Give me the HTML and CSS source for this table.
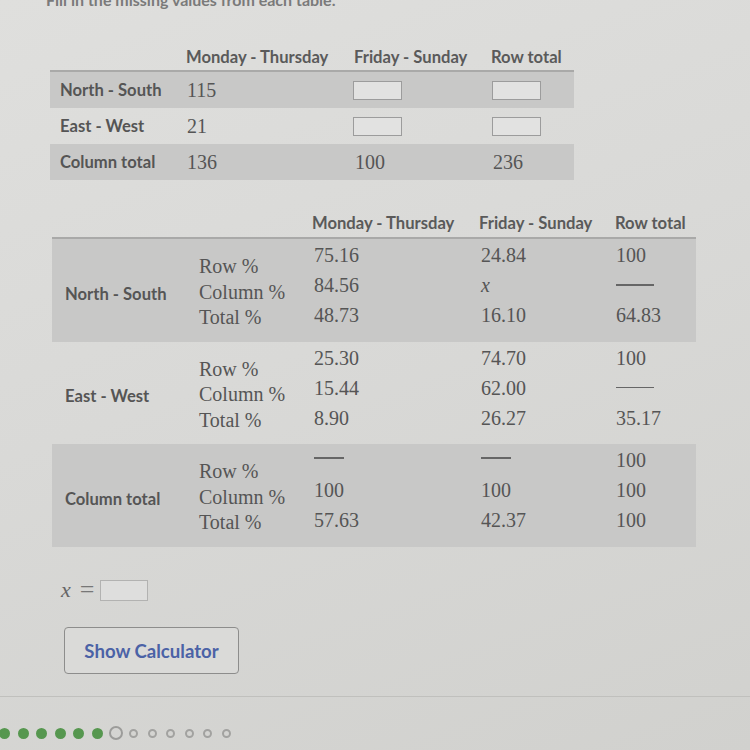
FILE: index.html
```html
<!DOCTYPE html>
<html>
<head>
<meta charset="utf-8">
<link rel="stylesheet" href="styles.css">
</head>
<body>
<div class="page">
  <p class="title">Fill in the missing values from each table.</p>

  <div class="t1">
    <div class="h"></div>
    <div class="h c1">Monday - Thursday</div>
    <div class="h c2">Friday - Sunday</div>
    <div class="h c3">Row total</div>

    <div class="r shade lab">North - South</div>
    <div class="r shade num c1">115</div>
    <div class="r shade c2"><span class="box"></span></div>
    <div class="r shade c3"><span class="box"></span></div>

    <div class="r lab">East - West</div>
    <div class="r num c1">21</div>
    <div class="r c2"><span class="box"></span></div>
    <div class="r c3"><span class="box"></span></div>

    <div class="r shade lab">Column total</div>
    <div class="r shade num c1">136</div>
    <div class="r shade num c2v">100</div>
    <div class="r shade num c3v">236</div>
  </div>

  <div class="t2">
    <div class="h"></div>
    <div class="h"></div>
    <div class="h k1">Monday - Thursday</div>
    <div class="h k2">Friday - Sunday</div>
    <div class="h k3">Row total</div>

    <div class="b shade lab">North - South</div>
    <div class="b shade sub"><span>Row %</span><span>Column %</span><span>Total %</span></div>
    <div class="b shade vals k1"><span>75.16</span><span>84.56</span><span>48.73</span></div>
    <div class="b shade vals k2"><span>24.84</span><span><i>x</i></span><span>16.10</span></div>
    <div class="b shade vals k3"><span>100</span><span><b class="dash long"></b></span><span>64.83</span></div>

    <div class="b lab">East - West</div>
    <div class="b sub"><span>Row %</span><span>Column %</span><span>Total %</span></div>
    <div class="b vals k1"><span>25.30</span><span>15.44</span><span>8.90</span></div>
    <div class="b vals k2"><span>74.70</span><span>62.00</span><span>26.27</span></div>
    <div class="b vals k3"><span>100</span><span><b class="dash"></b></span><span>35.17</span></div>

    <div class="b shade lab">Column total</div>
    <div class="b shade sub"><span>Row %</span><span>Column %</span><span>Total %</span></div>
    <div class="b shade vals k1"><span><b class="dash"></b></span><span>100</span><span>57.63</span></div>
    <div class="b shade vals k2"><span><b class="dash"></b></span><span>100</span><span>42.37</span></div>
    <div class="b shade vals k3"><span>100</span><span>100</span><span>100</span></div>
  </div>

  <div class="xrow"><i>x</i><span class="eq">=</span><span class="xbox"></span></div>

  <button class="calc">Show Calculator</button>
</div>
<div class="rule"></div>
<div class="dots">
  <span class="d on"></span><span class="d on"></span><span class="d on"></span><span class="d on"></span><span class="d on"></span><span class="d on"></span>
  <span class="d cur"></span>
  <span class="d"></span><span class="d"></span><span class="d"></span><span class="d"></span><span class="d"></span><span class="d"></span>
</div>
</body>
</html>
```

FILE: styles.css
```css
html, body {
  margin: 0;
  padding: 0;
}
body {
  width: 750px;
  height: 750px;
  overflow: hidden;
  background: linear-gradient(160deg, #dfdfdd 0%, #d9d9d7 45%, #d1d1ce 100%);
  font-family: Lato, "Liberation Sans", sans-serif;
  color: #555;
}
.title {
  margin: -8px 0 0 46px;
  height: 16px;
  line-height: 16px;
  font-size: 16px;
  font-weight: 700;
  color: #7a7a7a;
  white-space: nowrap;
}

/* table 1 */
.t1 {
  margin: 36px 0 0 50px;
  width: 524px;
  display: grid;
  grid-template-columns: 130px 165px 140px 89px;
  grid-template-rows: 28px 36px 36px 36px;
}
.h {
  display: flex;
  align-items: center;
  border-bottom: 2px solid #a9a9a8;
  font-size: 16.6px;
  font-weight: 700;
  color: #5a5a5a;
  white-space: nowrap;
}
.t1 .h { height: 28px; box-sizing: border-box; }
.t1 .c1 { padding-left: 6px; }
.t1 .c2 { padding-left: 9px; }
.t1 .c3 { padding-left: 6px; }
.t1 .c2v { padding-left: 10px; }
.t1 .c3v { padding-left: 8px; }
.shade { background: #c8c8c7; }
.r {
  display: flex;
  align-items: center;
}
.lab {
  font-size: 16.6px;
  font-weight: 700;
  color: #555;
  white-space: nowrap;
}
.t1 .lab { padding-left: 10px; }
.num {
  font-family: "Liberation Serif", serif;
  font-size: 20px;
  color: #555;
}
.t1 .num.c1 { padding-left: 7px; }
.t1 .r.c2 { padding-left: 8px; }
.t1 .r.c3 { padding-left: 7px; }
.box {
  display: block;
  width: 47px;
  height: 17px;
  border: 1px solid #9c9c9c;
  background: #e2e2e1;
}

/* table 2 */
.t2 {
  margin: 29px 0 0 52px;
  width: 644px;
  display: grid;
  grid-template-columns: 138px 115px 165px 137px 89px;
  grid-template-rows: 30px 103px 102px 103px;
}
.t2 .h { height: 30px; box-sizing: border-box; }
.t2 .h.k1 { padding-left: 7px; }
.t2 .h.k2 { padding-left: 9px; }
.t2 .h.k3 { padding-left: 8px; }
.b {
  display: flex;
  font-family: "Liberation Serif", serif;
  font-size: 20px;
  color: #555;
}
.b.lab {
  font-family: Lato, "Liberation Sans", sans-serif;
  font-size: 16.6px;
  align-items: center;
  padding-left: 13px;
  padding-top: 6px;
}
.b.sub {
  flex-direction: column;
  justify-content: center;
  padding-left: 9px;
  padding-top: 4px;
  line-height: 25.5px;
  white-space: nowrap;
}
.b.vals {
  flex-direction: column;
  justify-content: center;
  line-height: 30px;
  padding-bottom: 11px;
}
.b.vals.k1 { padding-left: 9px; }
.b.vals.k2 { padding-left: 11px; }
.b.vals.k3 { padding-left: 9px; }
.b.vals span {
  display: flex;
  align-items: center;
  height: 30px;
}
.dash {
  display: block;
  width: 30px;
  height: 1.5px;
  background: #666;
  margin-top: -4px;
}
.dash.long { width: 38px; margin-top: 0; }
.b.vals.k3 .dash { width: 38px; margin-top: 0; }
i {
  font-family: "Liberation Serif", serif;
  font-style: italic;
}

/* x = box */
.xrow {
  margin: 33px 0 0 61px;
  height: 20px;
  display: flex;
  align-items: center;
  font-family: "Liberation Serif", serif;
  font-size: 22px;
  color: #666;
}
.xrow .eq {
  font-size: 26px;
  margin: 0 6px 0 9px;
  color: #777;
}
.xbox {
  display: block;
  width: 46px;
  height: 19px;
  border: 1px solid #b2b2b1;
  background: #dededd;
}

.calc {
  display: block;
  margin: 27px 0 0 64px;
  width: 175px;
  height: 47px;
  border: 1px solid #8d8d8c;
  border-radius: 4px;
  background: #dadad8;
  font-family: Lato, "Liberation Sans", sans-serif;
  font-size: 18.6px;
  font-weight: 700;
  color: #4b62a6;
  padding: 0;
}

.rule {
  margin-top: 22px;
  height: 1px;
  background: #c0c0bd;
}
.dots {
  margin-top: 29px;
  display: flex;
  align-items: center;
  height: 14px;
}
.d {
  display: block;
  box-sizing: border-box;
  width: 9px;
  height: 9px;
  border: 2px solid #a2a2a0;
  border-radius: 50%;
  margin-right: 9.5px;
}
.d.on {
  background: #56974f;
  border-color: #56974f;
  width: 11px;
  height: 11px;
  margin-right: 7.5px;
}
.dots .d:first-child { margin-left: -1px; }
.d.cur {
  width: 14px;
  height: 14px;
  border-color: #9c9c9a;
  margin-left: -1px;
  margin-right: 6px;
}
```
